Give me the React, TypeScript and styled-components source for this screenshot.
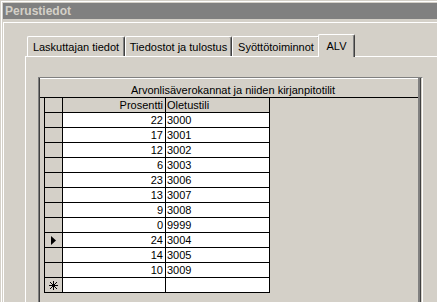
import styled, { createGlobalStyle } from 'styled-components';

const GlobalStyle = createGlobalStyle`
  body {
    margin: 0;
    background: #d4d0c8;
    font-family: 'Liberation Sans', Arial, sans-serif;
    font-size: 11px;
    color: #000;
  }
`;

type Rate = { percent: number; account: string; current?: boolean };

const rates: Rate[] = [
  { percent: 22, account: '3000' },
  { percent: 17, account: '3001' },
  { percent: 12, account: '3002' },
  { percent: 6, account: '3003' },
  { percent: 23, account: '3006' },
  { percent: 13, account: '3007' },
  { percent: 9, account: '3008' },
  { percent: 0, account: '9999' },
  { percent: 24, account: '3004', current: true },
  { percent: 14, account: '3005' },
  { percent: 10, account: '3009' },
];

const tabs = [
  { label: 'Laskuttajan tiedot', width: 98 },
  { label: 'Tiedostot ja tulostus', width: 107 },
  { label: 'Syöttötoiminnot', width: 88 },
  { label: 'ALV', width: 33, active: true },
];

const CurrentMark = () => (
  <svg width="5" height="9" viewBox="0 0 5 9">
    <polygon points="0,0 5,4.5 0,9" fill="#000" />
  </svg>
);

const NewMark = () => (
  <svg width="9" height="9" viewBox="0 0 9 9">
    <g stroke="#000" strokeWidth="1" shapeRendering="crispEdges">
      <line x1="4.5" y1="0" x2="4.5" y2="9" />
      <line x1="0" y1="4.5" x2="9" y2="4.5" />
      <line x1="1" y1="1" x2="8" y2="8" />
      <line x1="8" y1="1" x2="1" y2="8" />
    </g>
  </svg>
);

const App = () => {
  return (
    <>
      <GlobalStyle />
      <Window>
        <TitleBar>Perustiedot</TitleBar>
        <Client>
          <TabStrip>
            {tabs.map((t) => (
              <Tab key={t.label} $w={t.width} $active={!!t.active}>
                {t.label}
              </Tab>
            ))}
          </TabStrip>
          <TabPanel>
            <Sheet>
              <Caption>Arvonlisäverokannat ja niiden kirjanpitotilit</Caption>
              <Grid>
                <Selector $head />
                <HeadCell $right>Prosentti</HeadCell>
                <HeadCell>Oletustili</HeadCell>
                {rates.map((r) => (
                  <Row key={r.account}>
                    <Selector>{r.current && <CurrentMark />}</Selector>
                    <Cell $right>{r.percent}</Cell>
                    <Cell>{r.account}</Cell>
                  </Row>
                ))}
                <Selector>
                  <NewMark />
                </Selector>
                <Cell $right />
                <Cell />
              </Grid>
            </Sheet>
          </TabPanel>
        </Client>
      </Window>
    </>
  );
};

const Window = styled.div`
  display: flex;
  flex-direction: column;
  width: 437px;
  height: 302px;
  padding: 3px 0 0 3px;
  box-sizing: border-box;
  overflow: hidden;
  background: #d4d0c8;
  box-shadow: inset 1px 1px 0 #d4d0c8, inset 2px 2px 0 #fff;
`;

const TitleBar = styled.div`
  height: 16px;
  padding-left: 2px;
  line-height: 16px;
  font-weight: bold;
  font-size: 12px;
  color: #d4d0c8;
  background: #808080;
`;

const Client = styled.div`
  flex: 1;
  display: flex;
  flex-direction: column;
  margin-top: 3px;
  padding: 11px 0 0 21px;
  border-top: 1px solid #fff;
  border-left: 1px solid #fff;
`;

const TabStrip = styled.div`
  display: flex;
  align-items: flex-end;
  height: 22px;
  padding-left: 2px;
`;

const Tab = styled.div<{ $w: number; $active: boolean }>`
  position: relative;
  box-sizing: border-box;
  width: ${({ $w, $active }) => ($active ? $w + 4 : $w)}px;
  height: ${({ $active }) => ($active ? 23 : 20)}px;
  margin: ${({ $active }) => ($active ? '0 -2px -1px -2px' : '0')};
  padding-top: ${({ $active }) => ($active ? 4 : 3)}px;
  line-height: 14px;
  text-align: center;
  white-space: nowrap;
  background: #d4d0c8;
  border-top: 1px solid #fff;
  border-left: 1px solid #fff;
  border-right: 1px solid #404040;
  border-radius: 2px 2px 0 0;
  box-shadow: inset -1px 0 0 #808080;
  z-index: ${({ $active }) => ($active ? 2 : 1)};
`;

const TabPanel = styled.div`
  flex: 1;
  padding: 20px 0 0 12px;
  border-top: 1px solid #fff;
  border-left: 1px solid #fff;
`;

const Sheet = styled.div`
  width: 385px;
  height: 100%;
  box-sizing: border-box;
  padding: 0 4px 0 1px;
  border-top: 1px solid #808080;
  border-left: 1px solid #808080;
  border-right: 1px solid #fff;
  box-shadow: inset 1px 0 0 #404040, inset -1px 0 0 #d4d0c8,
    inset -2px 0 0 #404040, inset -4px 0 0 #808080;
`;

const Caption = styled.div`
  height: 13px;
  padding: 5px 0 0 8px;
  line-height: 13px;
  text-align: center;
  white-space: nowrap;
  border-top: 1px solid #fff;
  border-bottom: 1px solid #000;
`;

const Grid = styled.div`
  display: grid;
  grid-template-columns: 18px 103px 104px;
  grid-auto-rows: 15px;
  width: max-content;
  margin-left: 4px;
  border-left: 1px solid #000;
`;

const Row = styled.div`
  display: contents;
`;

const Selector = styled.div<{ $head?: boolean }>`
  display: flex;
  align-items: center;
  justify-content: center;
  background: #d4d0c8;
  border-right: 1px solid #000;
  border-bottom: 1px solid #000;
`;

const Cell = styled.div<{ $right?: boolean }>`
  padding: ${({ $right }) => ($right ? '0 2px 0 0' : '0 0 0 1px')};
  line-height: 14px;
  text-align: ${({ $right }) => ($right ? 'right' : 'left')};
  background: #fff;
  border-right: 1px solid #000;
  border-bottom: 1px solid #000;
`;

const HeadCell = styled(Cell)`
  background: #d4d0c8;
`;

export default App;
